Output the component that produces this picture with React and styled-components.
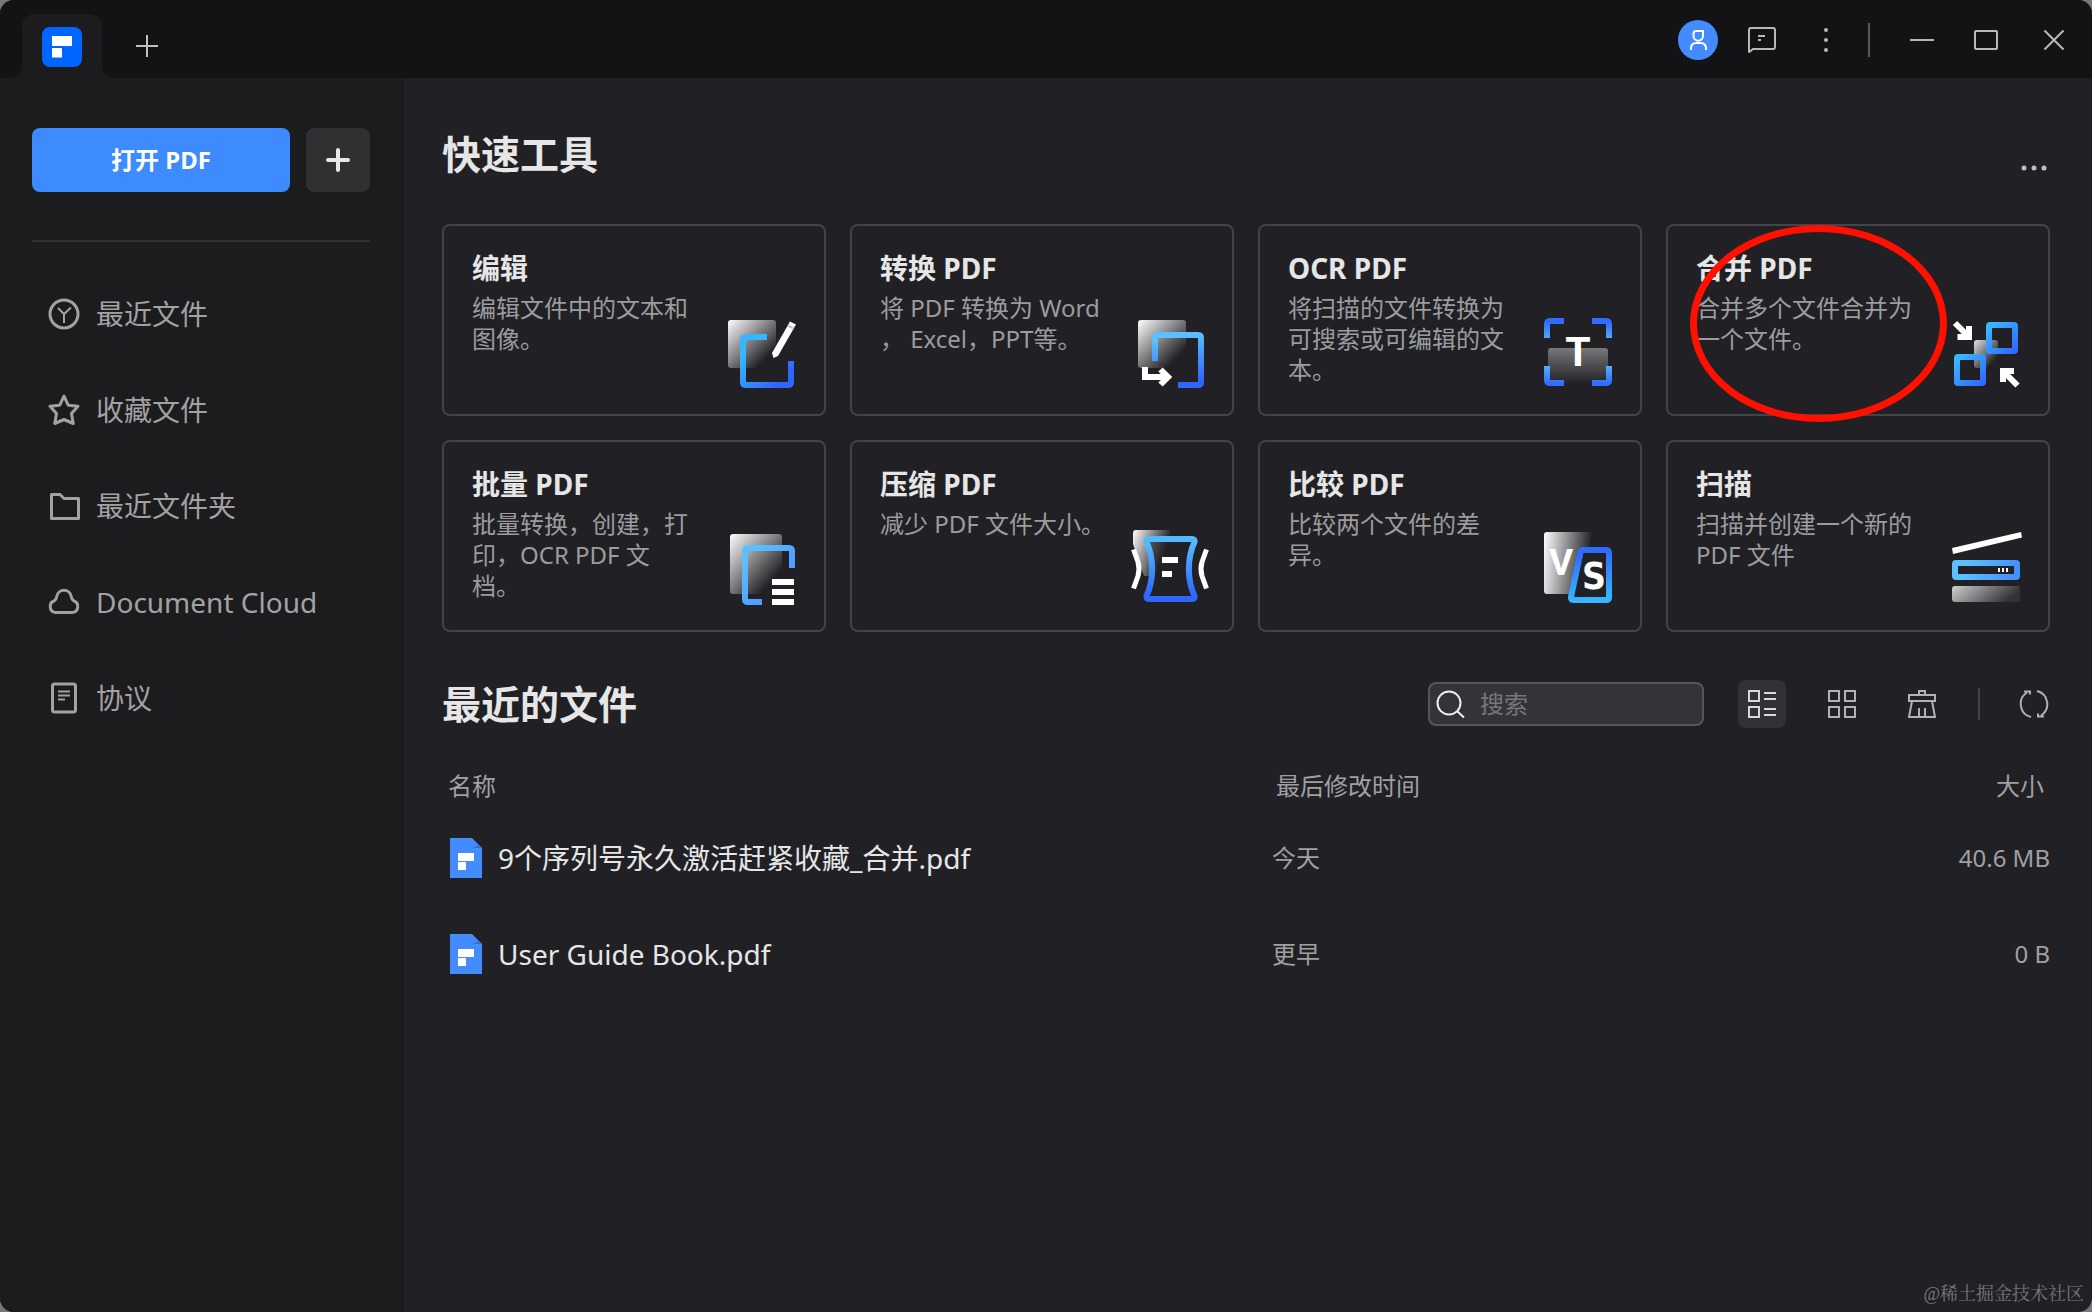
import React from "react";
import styled, { createGlobalStyle, css } from "styled-components";

const GlobalStyle = createGlobalStyle`
  *, *::before, *::after { box-sizing: border-box; }
  html { background: #77777c; }
  body {
    margin: 0;
    color: #e6e6e6;
    font-family: "Noto Sans", "Noto Sans CJK SC", sans-serif;
  }
  button, input {
    margin: 0;
    padding: 0;
    border: 0;
    background: none;
    color: inherit;
    font: inherit;
  }
  button { cursor: pointer; }
  svg { display: block; flex: none; }
`;

const Window = styled.div`
  position: relative;
  display: flex;
  flex-direction: column;
  min-height: 100vh;
  overflow: hidden;
  border-radius: 14px;
  background: #212125;
`;

/* ---------- title bar ---------- */

const TitleBar = styled.header`
  display: flex;
  align-items: flex-start;
  justify-content: space-between;
  height: 78px;
  padding: 0 18px 0 22px;
  background: #131315;
`;

const Tabs = styled.div`
  display: flex;
  align-items: flex-end;
  gap: 30px;
  height: 78px;
`;

const HomeTab = styled.button`
  position: relative;
  display: flex;
  align-items: center;
  justify-content: center;
  width: 80px;
  height: 64px;
  padding-top: 2px;
  border-radius: 12px 12px 0 0;
  background: #1c1c1e;

  &::before,
  &::after {
    content: "";
    position: absolute;
    bottom: 0;
    width: 10px;
    height: 10px;
  }
  &::before {
    right: 100%;
    background: radial-gradient(circle at 0 0, transparent 9px, #1c1c1e 10px);
  }
  &::after {
    left: 100%;
    background: radial-gradient(circle at 100% 0, transparent 9px, #1c1c1e 10px);
  }
`;

const NewTab = styled.button`
  display: flex;
  align-items: center;
  justify-content: center;
  width: 30px;
  height: 64px;
  color: #c0c0c2;
`;

const WindowActions = styled.div`
  display: flex;
  align-items: center;
  padding-top: 20px;
  color: #b9b9bb;
`;

const ActionGroup = styled.div`
  display: flex;
  gap: 24px;
`;

const ActionButton = styled.button`
  display: flex;
  align-items: center;
  justify-content: center;
  width: 40px;
  height: 40px;
  border-radius: 50%;
  ${(p) => p.$filled && css`background: #448bff; color: #fff;`}
`;

const BarDivider = styled.span`
  width: 2px;
  height: 34px;
  margin: 0 32px 0 22px;
  background: #57575a;
`;

const CloseButton = styled(ActionButton)`
  margin-left: 28px;
`;

/* ---------- layout ---------- */

const Body = styled.div`
  display: flex;
  flex: 1;
`;

const Sidebar = styled.aside`
  flex: none;
  width: 404px;
  padding: 50px 34px 32px 32px;
  background: #1c1c1e;
`;

const Main = styled.main`
  flex: 1;
  min-width: 0;
  padding: 50px 42px 48px 38px;
`;

/* ---------- sidebar ---------- */

const OpenRow = styled.div`
  display: flex;
  gap: 16px;
  padding-bottom: 48px;
  border-bottom: 2px solid #303032;
`;

const OpenButton = styled.button`
  flex: 1;
  height: 64px;
  border-radius: 8px;
  background: #3d8bff;
  color: #fff;
  font-size: 24px;
  font-weight: 700;
  line-height: 32px;
`;

const CreateButton = styled.button`
  display: flex;
  align-items: center;
  justify-content: center;
  width: 64px;
  height: 64px;
  border-radius: 8px;
  background: #303032;
  color: #e6e6e8;
`;

const Nav = styled.nav`
  display: flex;
  flex-direction: column;
  padding-top: 24px;
`;

const NavLink = styled.a`
  display: flex;
  align-items: center;
  gap: 16px;
  height: 96px;
  padding-left: 16px;
  color: #a2a2a3;
  font-size: 28px;
  line-height: 36px;
  text-decoration: none;
  white-space: nowrap;
`;

/* ---------- quick tools ---------- */

const SectionHead = styled.div`
  display: flex;
  align-items: flex-end;
  justify-content: space-between;
  margin-bottom: 44px;
`;

const SectionTitle = styled.h2`
  margin: 0;
  color: #e6e6e6;
  font-size: 39px;
  font-weight: 700;
  line-height: 52px;
`;

const MoreButton = styled.button`
  display: flex;
  align-items: center;
  justify-content: center;
  width: 32px;
  height: 24px;
  color: #c0c0c2;
`;

const ToolGrid = styled.div`
  display: grid;
  grid-template-columns: repeat(4, minmax(0, 1fr));
  gap: 24px;
`;

const ToolCard = styled.button`
  position: relative;
  display: flex;
  justify-content: space-between;
  min-height: 192px;
  padding: 24px 22px 20px 28px;
  border: 2px solid #444448;
  border-radius: 8px;
  text-align: left;
`;

const ToolText = styled.span`
  display: flex;
  flex-direction: column;
  gap: 6px;
`;

const ToolName = styled.span`
  color: #e6e6e6;
  font-size: 28px;
  font-weight: 700;
  line-height: 36px;
`;

const ToolHint = styled.span`
  color: #9c9c9e;
  font-size: 24px;
  line-height: 31px;
  white-space: pre;
`;

const ToolIcon = styled.svg`
  align-self: flex-end;
  width: 80px;
  height: 80px;
  overflow: visible;

  text {
    fill: #fff;
    font-weight: 700;
    text-anchor: middle;
  }
`;

const Highlight = styled.span`
  position: absolute;
  top: -1px;
  left: 22px;
  width: 257px;
  height: 197px;
  border: 7px solid #ff1000;
  border-radius: 50%;
  pointer-events: none;
`;

/* ---------- recent files ---------- */

const RecentHead = styled.div`
  display: flex;
  align-items: center;
  justify-content: space-between;
  margin: 46px 0 32px;
`;

const Toolbar = styled.div`
  display: flex;
  align-items: center;
  gap: 32px;
  color: #b0b0b6;
`;

const SearchBox = styled.label`
  display: flex;
  align-items: center;
  gap: 14px;
  width: 276px;
  height: 44px;
  margin-right: 2px;
  padding: 0 8px 0 6px;
  border: 2px solid #55555a;
  border-radius: 8px;
  background: #343438;
  color: #f0f0f0;

  input {
    flex: 1;
    min-width: 0;
    outline: 0;
    font-size: 24px;
    line-height: 32px;
  }
  input::placeholder { color: #77777b; opacity: 1; }
`;

const ToolButton = styled.button`
  display: flex;
  align-items: center;
  justify-content: center;
  width: ${(p) => (p.$narrow ? 32 : 48)}px;
  height: 48px;
  border-radius: 8px;
  ${(p) => p.$active && css`background: #313138; color: #d6d6de;`}
`;

const ToolbarDivider = styled.span`
  width: 2px;
  height: 32px;
  margin-right: 6px;
  background: #434347;
`;

const FileTable = styled.table`
  width: 100%;
  table-layout: fixed;
  border-collapse: collapse;
  color: #a0a0a2;
  font-size: 24px;
  line-height: 32px;

  th, td { padding: 0; text-align: left; font-weight: 400; }
  th { height: 48px; padding: 0 6px; }
  td { height: 96px; }
  th:last-child, td:last-child { width: 200px; text-align: right; }
  th:nth-child(2) { width: 578px; padding-left: 4px; }
`;

const FileName = styled.a`
  display: flex;
  align-items: center;
  gap: 16px;
  padding-left: 8px;
  color: #e6e6e6;
  font-size: 28px;
  line-height: 36px;
  text-decoration: none;
`;

const Watermark = styled.small`
  position: absolute;
  right: 8px;
  bottom: 6px;
  color: #77777b;
  font-family: "Liberation Serif", "Noto Serif CJK SC", "Noto Sans CJK SC", serif;
  font-size: 18px;
  line-height: 24px;
`;

/* ---------- small icons ---------- */

const Line = ({ w = 32, h = 32, sw = 2, children }) => (
  <svg width={w} height={h} viewBox={`0 0 ${w} ${h}`} fill="none" stroke="currentColor" strokeWidth={sw} aria-hidden="true">
    {children}
  </svg>
);

const Logo = () => (
  <svg width="40" height="40" viewBox="0 0 40 40" aria-hidden="true">
    <rect width="40" height="40" rx="8" fill="#0066ff" />
    <path d="M10 9H30V19H10ZM10 21H20V30.500H10Z" fill="#fff" />
    <path d="M20 21H22L20 24Z" fill="#0055e0" />
  </svg>
);

const FileIcon = () => (
  <svg width="32" height="40" viewBox="0 0 32 40" aria-hidden="true">
    <path d="M0 0H22L32 10V40H0Z" fill="#448bff" />
    <path d="M22 10H32L29 7Z" fill="#2f6fe0" />
    <path d="M8 15H24V23H8ZM8 24H16V32H8Z" fill="#fff" />
  </svg>
);

const navItems = [
  {
    label: "最近文件",
    icon: (
      <Line sw={3}>
        <circle cx="16" cy="16" r="14" />
        <path d="M10 10L16 16L23 9.500M16 15V25" strokeWidth="2" />
      </Line>
    ),
  },
  {
    label: "收藏文件",
    icon: (
      <Line sw={3}>
        <path d="M16 2L20.200 11.200L30 12.300L23.500 19.500L25.200 29.500L16 25.500L6.800 29.500L8.500 19.500L2 12.300L11.800 11.200Z" strokeLinejoin="round" />
      </Line>
    ),
  },
  {
    label: "最近文件夹",
    icon: (
      <Line sw={3}>
        <path d="M3.500 4.500H12L16 8.500H30.500V28.500H3.500Z" strokeLinejoin="round" />
      </Line>
    ),
  },
  {
    label: "Document Cloud",
    icon: (
      <Line sw={3}>
        <path d="M7.500 26.500A6 6 0 0 1 6.500 14.800Q8 14 8.700 10.500A7.400 7.400 0 0 1 23.300 10.500Q24 14 25.500 14.800A6 6 0 0 1 24.500 26.500Z" strokeLinejoin="round" />
      </Line>
    ),
  },
  {
    label: "协议",
    icon: (
      <Line sw={3}>
        <rect x="4.500" y="2" width="23" height="28" rx="2" />
        <path d="M10 9.500H22M10 13.500H22M10 17.500H17" strokeWidth="2" />
      </Line>
    ),
  },
];

/* ---------- tool icons ---------- */

const Fade = ({ id, x2 = 0.8, y2 = 0.8, from = "#ffffff" }) => (
  <linearGradient id={id} x1="0" y1="0" x2={x2} y2={y2}>
    <stop offset="0" stopColor={from} />
    <stop offset="1" stopColor={from} stopOpacity="0" />
  </linearGradient>
);

const Blue = ({ id, x1 = 0, y1 = 0, x2 = 80, y2 = 80, a = "#38b6ff", b = "#2f66ff" }) => (
  <linearGradient id={id} gradientUnits="userSpaceOnUse" x1={x1} y1={y1} x2={x2} y2={y2}>
    <stop offset="0.2" stopColor={a} />
    <stop offset="0.9" stopColor={b} />
  </linearGradient>
);

const EditArt = () => (
  <>
    <defs>
      <Fade id="edit-g" />
      <Blue id="edit-b" x1={15} y1={30} x2={60} y2={76} />
    </defs>
    <rect x="6" y="6" width="48" height="48" rx="3" fill="url(#edit-g)" />
    <path d="M45 23H24Q21 23 21 26V68Q21 71 24 71H66Q69 71 69 68V47" fill="none" stroke="url(#edit-b)" strokeWidth="6" />
    <path d="M68 7.500L74 10.500L56 42L51.500 44L50 39Z" fill="#fff" />
    <path d="M66 11.500L71.500 14.500" stroke="#c4c4c6" strokeWidth="2" />
  </>
);

const ConvertArt = () => (
  <>
    <defs>
      <Fade id="conv-g" />
      <Blue id="conv-b" x1={40} y1={10} x2={50} y2={76} a="#5cc0ff" />
    </defs>
    <rect x="8" y="6" width="48" height="48" rx="3" fill="url(#conv-g)" />
    <path d="M25 47V24Q25 21 28 21H68Q71 21 71 24V68Q71 71 68 71H48" fill="none" stroke="url(#conv-b)" strokeWidth="6" />
    <path d="M15 53V63H38M30.500 55.500L38 63L30.500 70.500" fill="none" stroke="#fff" strokeWidth="6" />
  </>
);

const OcrArt = () => (
  <>
    <defs>
      <linearGradient id="ocr-g" x1="0" y1="0" x2="0" y2="1">
        <stop offset="0" stopColor="#77777a" />
        <stop offset="1" stopColor="#77777a" stopOpacity="0" />
      </linearGradient>
      <linearGradient id="ocr-t" gradientUnits="userSpaceOnUse" x1="0" y1="8" x2="0" y2="26">
        <stop offset="0" stopColor="#2f6bff" />
        <stop offset="1" stopColor="#55b0ff" />
      </linearGradient>
      <linearGradient id="ocr-b" gradientUnits="userSpaceOnUse" x1="0" y1="52" x2="0" y2="70">
        <stop offset="0" stopColor="#55b0ff" />
        <stop offset="1" stopColor="#2f6bff" />
      </linearGradient>
    </defs>
    <rect x="10" y="34" width="60" height="36" rx="3" fill="url(#ocr-g)" />
    <path d="M9 24V10Q9 7 12 7H26M54 7H68Q71 7 71 10V24" fill="none" stroke="url(#ocr-t)" strokeWidth="6" />
    <path d="M9 52V66Q9 69 12 69H26M54 69H68Q71 69 71 66V52" fill="none" stroke="url(#ocr-b)" strokeWidth="6" />
    <text x="40" y="52" fontSize="41" fontFamily="Roboto, sans-serif">T</text>
  </>
);

const MergeArt = () => (
  <>
    <defs>
      <Fade id="merge-g" from="#e4e4e4" />
      <Blue id="merge-a" x1={38} y1={4} x2={74} y2={42} />
      <Blue id="merge-b" x1={6} y1={36} x2={42} y2={74} />
    </defs>
    <rect x="28" y="26" width="24" height="28" rx="3" fill="url(#merge-g)" />
    <rect x="43" y="11" width="26" height="26" rx="1" fill="none" stroke="url(#merge-a)" strokeWidth="6" />
    <rect x="11" y="43" width="26" height="26" rx="1" fill="none" stroke="url(#merge-b)" strokeWidth="6" />
    <path d="M9 9L23 23M11.500 23H23V12M57 68V57H68M57 57L71.500 71.500" fill="none" stroke="#fff" strokeWidth="6" />
  </>
);

const BatchArt = () => (
  <>
    <defs>
      <Fade id="batch-g" />
      <Blue id="batch-b" x1={20} y1={10} x2={76} y2={60} a="#5cc0ff" b="#4a92ff" />
    </defs>
    <rect x="8" y="4" width="52" height="60" rx="3" fill="url(#batch-g)" />
    <path d="M70 38V21Q70 18 67 18H26Q23 18 23 21V69Q23 72 26 72H40" fill="none" stroke="url(#batch-b)" strokeWidth="6" />
    <path d="M50 52H72M50 62H72M50 72H72" stroke="#fff" strokeWidth="6" />
  </>
);

const CompressArt = () => (
  <>
    <defs>
      <Fade id="comp-g" x2={0.9} y2={0.4} />
      <Blue id="comp-b" x1={40} y1={0} x2={40} y2={72} a="#55b8ff" b="#2f66ff" />
    </defs>
    <path d="M6 0H40V46H14L3 14V3Q3 0 6 0Z" fill="url(#comp-g)" />
    <path
      d="M19 9H62Q65 9 64.500 12C57 28 57 50 64.500 66Q65 69 62 69H19Q16 69 16.500 66C24 50 24 28 16.500 12Q16 9 19 9Z"
      fill="#212125"
      fillOpacity="0.5"
      stroke="url(#comp-b)"
      strokeWidth="6"
    />
    <path d="M3.500 19.500L8 32Q10 39 8 46L3.500 58.500M76.500 19.500L72 32Q70 39 72 46L76.500 58.500" fill="none" stroke="#fff" strokeWidth="5" />
    <path d="M32 30H48M32 44H42" stroke="#fff" strokeWidth="6" />
  </>
);

const CompareArt = () => (
  <>
    <defs>
      <Fade id="cmp-g" x2={1} y2={0.15} />
      <Blue id="cmp-b" x1={50} y1={10} x2={56} y2={76} a="#2f6bff" b="#38b6ff" />
    </defs>
    <path d="M9 2H54L42 64H9Q6 64 6 61V5Q6 2 9 2Z" fill="url(#cmp-g)" />
    <path
      d="M45.500 20H68Q71 20 71 23V67Q71 70 68 70H35.500Q32.500 70 33 67L42.500 22.500Q43 20 45.500 20Z"
      fill="#212125"
      stroke="url(#cmp-b)"
      strokeWidth="6"
    />
    <text x="23" y="45" fontSize="37" fontFamily="Roboto, sans-serif">V</text>
    <text x="56" y="59" fontSize="37" fontFamily="'DejaVu Sans Condensed', sans-serif">S</text>
  </>
);

const ScanArt = () => (
  <>
    <defs>
      <linearGradient id="scan-g" x1="0" y1="0" x2="1" y2="0.3">
        <stop offset="0" stopColor="#d0d0d0" />
        <stop offset="1" stopColor="#d0d0d0" stopOpacity="0.1" />
      </linearGradient>
      <Blue id="scan-b" x1={6} y1={30} x2={74} y2={50} a="#5cc0ff" b="#4490ff" />
    </defs>
    <path d="M6 18L75 2L76 7.500L7 24Z" fill="#fff" />
    <rect x="9" y="33" width="62" height="14" rx="1" fill="none" stroke="url(#scan-b)" strokeWidth="6" />
    <path d="M53 38V42M57 38V42M61 38V42" stroke="#fff" strokeWidth="2" />
    <rect x="6" y="56" width="68" height="16" rx="3" fill="url(#scan-g)" />
  </>
);

const tools = [
  { name: "编辑", hint: "编辑文件中的文本和\n图像。", Art: EditArt },
  { name: "转换 PDF", hint: "将 PDF 转换为 Word\n， Excel，PPT等。", Art: ConvertArt },
  { name: "OCR PDF", hint: "将扫描的文件转换为\n可搜索或可编辑的文\n本。", Art: OcrArt },
  { name: "合并 PDF", hint: "合并多个文件合并为\n一个文件。", Art: MergeArt, marked: true },
  { name: "批量 PDF", hint: "批量转换，创建，打\n印，OCR PDF 文\n档。", Art: BatchArt },
  { name: "压缩 PDF", hint: "减少 PDF 文件大小。", Art: CompressArt },
  { name: "比较 PDF", hint: "比较两个文件的差\n异。", Art: CompareArt },
  { name: "扫描", hint: "扫描并创建一个新的\nPDF 文件", Art: ScanArt },
];

const files = [
  { name: "9个序列号永久激活赶紧收藏_合并.pdf", date: "今天", size: "40.6 MB" },
  { name: "User Guide Book.pdf", date: "更早", size: "0 B" },
];

export default function App() {
  return (
    <Window lang="zh-CN">
      <GlobalStyle />
      <TitleBar>
        <Tabs>
          <HomeTab aria-label="主页"><Logo /></HomeTab>
          <NewTab aria-label="新标签页">
            <Line w={22} h={22}><path d="M11 0V22M0 11H22" /></Line>
          </NewTab>
        </Tabs>
        <WindowActions>
          <ActionGroup>
            <ActionButton $filled aria-label="账户">
              <Line w={20} h={22}>
                <path d="M7.500 2H15V7A4.500 4.500 0 0 1 5.500 7V5Q5.500 2 8 2M3 21V19.500Q3 14 8 14H12.500Q18 14 18 19.500V21" />
              </Line>
            </ActionButton>
            <ActionButton aria-label="反馈">
              <Line w={28} h={26}>
                <path d="M1 24.500V3Q1 1 3 1H25Q27 1 27 3V20Q27 22 25 22H5L2 24.500Q1 25.500 1 24.500ZM10 9H17M10 13H13" />
              </Line>
            </ActionButton>
            <ActionButton aria-label="菜单">
              <svg width="4" height="24" viewBox="0 0 4 24" fill="currentColor" aria-hidden="true">
                <circle cx="2" cy="2" r="2" /><circle cx="2" cy="12" r="2" /><circle cx="2" cy="22" r="2" />
              </svg>
            </ActionButton>
          </ActionGroup>
          <BarDivider />
          <ActionGroup>
            <ActionButton aria-label="最小化"><Line w={24} h={2}><path d="M0 1H24" /></Line></ActionButton>
            <ActionButton aria-label="最大化">
              <Line w={24} h={20}><rect x="1" y="1" width="22" height="18" rx="1" /></Line>
            </ActionButton>
          </ActionGroup>
          <CloseButton aria-label="关闭"><Line w={20} h={20}><path d="M0.500 0.500L19.500 19.500M19.500 0.500L0.500 19.500" /></Line></CloseButton>
        </WindowActions>
      </TitleBar>

      <Body>
        <Sidebar>
          <OpenRow>
            <OpenButton>打开 PDF</OpenButton>
            <CreateButton aria-label="新建">
              <Line w={24} h={24} sw={4}><path d="M12 2V22M2 12H22" strokeLinecap="round" /></Line>
            </CreateButton>
          </OpenRow>
          <Nav>
            {navItems.map((item) => (
              <NavLink key={item.label} href="#">{item.icon}{item.label}</NavLink>
            ))}
          </Nav>
        </Sidebar>

        <Main>
          <SectionHead>
            <SectionTitle>快速工具</SectionTitle>
            <MoreButton aria-label="更多">
              <svg width="26" height="6" viewBox="0 0 26 6" fill="currentColor" aria-hidden="true">
                <circle cx="3" cy="3" r="2.500" /><circle cx="13" cy="3" r="2.500" /><circle cx="23" cy="3" r="2.500" />
              </svg>
            </MoreButton>
          </SectionHead>

          <ToolGrid>
            {tools.map(({ name, hint, Art, marked }) => (
              <ToolCard key={name}>
                <ToolText>
                  <ToolName>{name}</ToolName>
                  <ToolHint>{hint}</ToolHint>
                </ToolText>
                <ToolIcon viewBox="0 0 80 80" aria-hidden="true"><Art /></ToolIcon>
                {marked && <Highlight />}
              </ToolCard>
            ))}
          </ToolGrid>

          <RecentHead>
            <SectionTitle>最近的文件</SectionTitle>
            <Toolbar>
              <SearchBox>
                <Line w={30} h={30}><circle cx="13" cy="14" r="11.500" /><path d="M21 22L28 28.500" /></Line>
                <input type="search" placeholder="搜索" aria-label="搜索" />
              </SearchBox>
              <ToolButton $active aria-label="列表视图">
                <Line w={28} h={28}>
                  <rect x="1" y="1" width="10" height="10" /><rect x="1" y="17" width="10" height="10" />
                  <path d="M16 3H28M16 9H28M16 19H28M16 25H28" />
                </Line>
              </ToolButton>
              <ToolButton aria-label="网格视图">
                <Line w={28} h={28}>
                  <rect x="1" y="1" width="10" height="10" /><rect x="17" y="1" width="10" height="10" />
                  <rect x="1" y="17" width="10" height="10" /><rect x="17" y="17" width="10" height="10" />
                </Line>
              </ToolButton>
              <ToolButton aria-label="清除记录">
                <Line w={28} h={28}>
                  <path d="M11 5V1H17V5M1 5H27V11H1ZM4 11L1 27H27L24 11M11 18V27M17 18V27" />
                </Line>
              </ToolButton>
              <ToolbarDivider />
              <ToolButton $narrow aria-label="刷新">
                <Line w={30} h={30}>
                  <path d="M12 28A13.500 13.500 0 0 1 8 3.500M18 2A13.500 13.500 0 0 1 22 26.500M5 2.500H11V5.500M25 27.500H19V24.500" />
                </Line>
              </ToolButton>
            </Toolbar>
          </RecentHead>

          <FileTable>
            <thead>
              <tr>
                <th scope="col">名称</th>
                <th scope="col">最后修改时间</th>
                <th scope="col">大小</th>
              </tr>
            </thead>
            <tbody>
              {files.map((file) => (
                <tr key={file.name}>
                  <td><FileName href="#"><FileIcon />{file.name}</FileName></td>
                  <td>{file.date}</td>
                  <td>{file.size}</td>
                </tr>
              ))}
            </tbody>
          </FileTable>
        </Main>
      </Body>
      <Watermark>@稀土掘金技术社区</Watermark>
    </Window>
  );
}
